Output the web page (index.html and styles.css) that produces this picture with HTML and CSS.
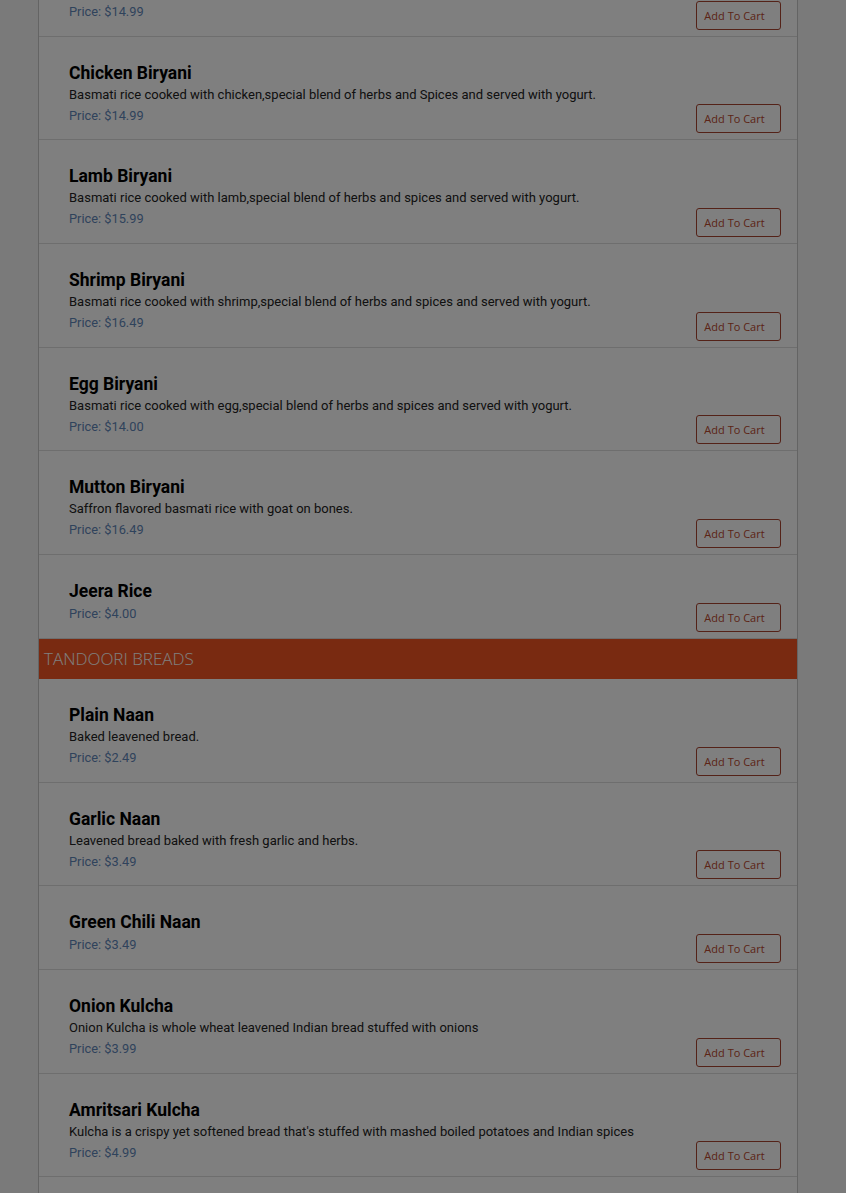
FILE: index.html
```html
<!DOCTYPE html>
<html lang="en">
<head>
    <meta charset="UTF-8">
    <meta name="viewport" content="width=device-width, initial-scale=1.0">
    <title>Menu</title>
    <link rel="stylesheet" href="styles.css">
</head>
<body>
    <div class="menu">
        <div class="item">
            <div class="info">
                <h3>Vegetable Biryani</h3>
                <p class="desc">Basmati rice cooked with vegetables,special blend of herbs and spices and served with yogurt.</p>
                <p class="price">Price: $14.99</p>
            </div>
            <button class="cart-btn">Add To Cart</button>
        </div>
        <div class="item">
            <div class="info">
                <h3>Chicken Biryani</h3>
                <p class="desc">Basmati rice cooked with chicken,special blend of herbs and Spices and served with yogurt.</p>
                <p class="price">Price: $14.99</p>
            </div>
            <button class="cart-btn">Add To Cart</button>
        </div>
        <div class="item">
            <div class="info">
                <h3>Lamb Biryani</h3>
                <p class="desc">Basmati rice cooked with lamb,special blend of herbs and spices and served with yogurt.</p>
                <p class="price">Price: $15.99</p>
            </div>
            <button class="cart-btn">Add To Cart</button>
        </div>
        <div class="item">
            <div class="info">
                <h3>Shrimp Biryani</h3>
                <p class="desc">Basmati rice cooked with shrimp,special blend of herbs and spices and served with yogurt.</p>
                <p class="price">Price: $16.49</p>
            </div>
            <button class="cart-btn">Add To Cart</button>
        </div>
        <div class="item">
            <div class="info">
                <h3>Egg Biryani</h3>
                <p class="desc">Basmati rice cooked with egg,special blend of herbs and spices and served with yogurt.</p>
                <p class="price">Price: $14.00</p>
            </div>
            <button class="cart-btn">Add To Cart</button>
        </div>
        <div class="item">
            <div class="info">
                <h3>Mutton Biryani</h3>
                <p class="desc">Saffron flavored basmati rice with goat on bones.</p>
                <p class="price">Price: $16.49</p>
            </div>
            <button class="cart-btn">Add To Cart</button>
        </div>
        <div class="item">
            <div class="info">
                <h3>Jeera Rice</h3>
                <p class="price">Price: $4.00</p>
            </div>
            <button class="cart-btn">Add To Cart</button>
        </div>

        <h2 class="category">TANDOORI BREADS</h2>

        <div class="item">
            <div class="info">
                <h3>Plain Naan</h3>
                <p class="desc">Baked leavened bread.</p>
                <p class="price">Price: $2.49</p>
            </div>
            <button class="cart-btn">Add To Cart</button>
        </div>
        <div class="item">
            <div class="info">
                <h3>Garlic Naan</h3>
                <p class="desc">Leavened bread baked with fresh garlic and herbs.</p>
                <p class="price">Price: $3.49</p>
            </div>
            <button class="cart-btn">Add To Cart</button>
        </div>
        <div class="item">
            <div class="info">
                <h3>Green Chili Naan</h3>
                <p class="price">Price: $3.49</p>
            </div>
            <button class="cart-btn">Add To Cart</button>
        </div>
        <div class="item">
            <div class="info">
                <h3>Onion Kulcha</h3>
                <p class="desc">Onion Kulcha is whole wheat leavened Indian bread stuffed with onions</p>
                <p class="price">Price: $3.99</p>
            </div>
            <button class="cart-btn">Add To Cart</button>
        </div>
        <div class="item">
            <div class="info">
                <h3>Amritsari Kulcha</h3>
                <p class="desc">Kulcha is a crispy yet softened bread that's stuffed with mashed boiled potatoes and Indian spices</p>
                <p class="price">Price: $4.99</p>
            </div>
            <button class="cart-btn">Add To Cart</button>
        </div>
        <div class="item">
            <div class="info">
                <h3>Bullet Naan</h3>
                <p class="desc">Leavened bread baked with green chillies and herbs.</p>
                <p class="price">Price: $3.49</p>
            </div>
            <button class="cart-btn">Add To Cart</button>
        </div>
    </div>

    <!-- modal backdrop -->
    <div class="backdrop"></div>
</body>
</html>
```

FILE: styles.css
```css
body {
    margin: 0;
    background: #f4f4f4;
    font-family: Roboto, sans-serif;
    color: #222;
}
.menu {
    width: 758px;
    margin: -67px 0 0 38px;
    background: #fff;
    border-left: 1px solid #c8c8c8;
    border-right: 1px solid #c8c8c8;
}
.item {
    display: flex;
    justify-content: space-between;
    align-items: flex-end;
    padding: 26px 16px 6px 30px;
    border-bottom: 1px solid #ddd;
}
.info {
    padding-bottom: 7.7px;
}
.item h3 {
    margin: 0 0 1px;
    font-size: 17.5px;
    line-height: 21px;
    font-weight: bold;
    color: #000;
}
.item .desc {
    margin: 0;
    font-size: 13px;
    line-height: 19px;
}
.item .price {
    margin: 1px 0 0;
    font-size: 12.8px;
    line-height: 21px;
    color: #5f86b8;
}
.cart-btn {
    width: 85px;
    height: 29px;
    padding: 0 8px 0 0;
    background: #fff;
    border: 1px solid #a84430;
    border-radius: 3px;
    color: #b8482e;
    font-family: "Open Sans", sans-serif;
    font-size: 11px;
    cursor: pointer;
}
.category {
    margin: 0;
    height: 40px;
    padding-left: 5px;
    background: #f25522;
    color: #fff;
    font-family: "Open Sans", sans-serif;
    font-size: 17px;
    font-weight: 300;
    line-height: 40px;
}
.backdrop {
    position: fixed;
    top: 0;
    left: 0;
    right: 0;
    bottom: 0;
    background: rgba(0, 0, 0, 0.5);
}
```
